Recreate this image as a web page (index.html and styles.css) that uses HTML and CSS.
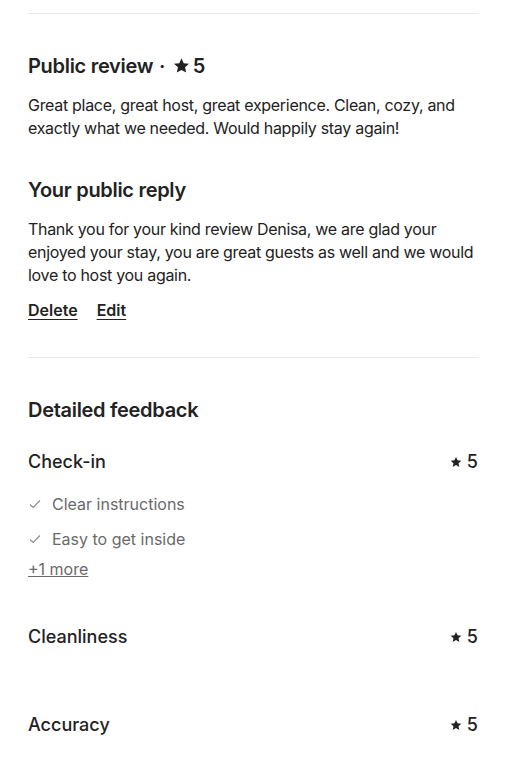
FILE: index.html
```html
<!DOCTYPE html>
<html lang="en">
<head>
    <meta charset="UTF-8">
    <meta name="viewport" content="width=device-width, initial-scale=1.0">
    <title>Review</title>
    <link rel="stylesheet" href="styles.css">
</head>
<body>
    <div class="container">
        <hr class="divider top">

        <section class="review">
            <h2 class="title">Public review <span class="dot">·</span>
                <svg class="star big" viewBox="0 0 24 24"><path d="M12 1.8l3.1 6.9 7.5.8-5.6 5.1 1.6 7.4L12 18.2 5.4 22l1.6-7.4-5.6-5.1 7.5-.8z"/></svg>5</h2>
            <p class="text">Great place, great host, great experience. Clean, cozy, and exactly what we needed. Would happily stay again!</p>

            <h2 class="title reply-title">Your public reply</h2>
            <p class="text">Thank you for your kind review Denisa, we are glad your enjoyed your stay, you are great guests as well and we would love to host you again.</p>
            <div class="actions">
                <a href="#">Delete</a>
                <a href="#">Edit</a>
            </div>
        </section>

        <hr class="divider">

        <section class="feedback">
            <h2 class="title">Detailed feedback</h2>

            <div class="category with-tags">
                <div class="row">
                    <span class="name">Check-in</span>
                    <span class="score"><svg class="star" viewBox="0 0 24 24"><path d="M12 1.8l3.1 6.9 7.5.8-5.6 5.1 1.6 7.4L12 18.2 5.4 22l1.6-7.4-5.6-5.1 7.5-.8z"/></svg>5</span>
                </div>
                <ul class="tags">
                    <li><svg class="check" viewBox="0 0 12 12"><path d="M1 6.5l3.2 3L11 2.5"/></svg>Clear instructions</li>
                    <li><svg class="check" viewBox="0 0 12 12"><path d="M1 6.5l3.2 3L11 2.5"/></svg>Easy to get inside</li>
                </ul>
                <a href="#" class="more">+1 more</a>
            </div>

            <div class="category">
                <div class="row">
                    <span class="name">Cleanliness</span>
                    <span class="score"><svg class="star" viewBox="0 0 24 24"><path d="M12 1.8l3.1 6.9 7.5.8-5.6 5.1 1.6 7.4L12 18.2 5.4 22l1.6-7.4-5.6-5.1 7.5-.8z"/></svg>5</span>
                </div>
            </div>

            <div class="category">
                <div class="row">
                    <span class="name">Accuracy</span>
                    <span class="score"><svg class="star" viewBox="0 0 24 24"><path d="M12 1.8l3.1 6.9 7.5.8-5.6 5.1 1.6 7.4L12 18.2 5.4 22l1.6-7.4-5.6-5.1 7.5-.8z"/></svg>5</span>
                </div>
            </div>
        </section>
    </div>
</body>
</html>
```

FILE: styles.css
```css
body {
    font-family: Inter, "Noto Sans", sans-serif;
    margin: 0;
    color: #222222;
    background: #ffffff;
}
.container {
    padding: 0 28px;
}
.divider {
    border: none;
    border-top: 1px solid #e6e6e6;
    margin: 0;
}
.divider.top {
    margin-top: 13px;
}
.review {
    padding: 39px 0 37px;
}
.title {
    font-size: 20px;
    font-weight: 600;
    letter-spacing: -0.3px;
    margin: 0;
    line-height: 26px;
}
.title .dot {
    margin: 0 3px 0 1px;
}
.star {
    width: 12px;
    height: 12px;
    fill: #222222;
    margin-right: 5px;
}
.star.big {
    width: 17px;
    height: 17px;
    margin-right: 3px;
    vertical-align: -1px;
}
.text {
    font-size: 16px;
    line-height: 23px;
    margin: 15px 0 0;
    letter-spacing: -0.3px;
}
.reply-title {
    margin-top: 37px;
}
.actions {
    margin-top: 13px;
    display: flex;
    gap: 19px;
}
.actions a {
    color: #222222;
    font-size: 16px;
    font-weight: 600;
    text-decoration: underline;
    text-underline-offset: 3px;
}
.feedback {
    padding-top: 39px;
}
.category {
    margin-top: 0;
    padding-bottom: 64px;
}
.category.with-tags {
    margin-top: 27px;
    padding-bottom: 45px;
}
.row {
    display: flex;
    justify-content: space-between;
    align-items: center;
    font-size: 18px;
    font-weight: 500;
    line-height: 24px;
}
.score {
    display: flex;
    align-items: center;
    font-weight: 500;
}
.tags {
    list-style-type: none;
    padding: 0;
    margin: 19px 0 0;
}
.tags li {
    display: flex;
    align-items: center;
    color: #6a6a6a;
    font-size: 16px;
    line-height: 22px;
    margin-bottom: 13px;
}
.check {
    width: 12px;
    height: 12px;
    fill: none;
    stroke: #8a8a8a;
    stroke-width: 1.1;
    margin: 0 11px 0 1px;
}
.more {
    display: block;
    color: #6a6a6a;
    font-size: 16px;
    line-height: 22px;
    margin-top: -5px;
}
```
